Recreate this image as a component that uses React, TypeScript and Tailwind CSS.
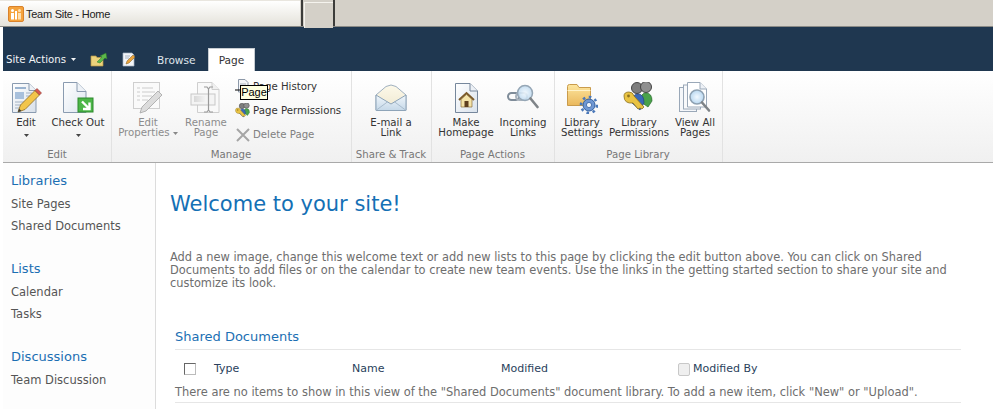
import React from "react";

const Edit = () => (
  <svg width="32" height="32" viewBox="0 0 32 32">
    <defs><linearGradient id="p1" x1="0" y1="0" x2="1" y2="1"><stop offset="0" stopColor="#ffffff"/><stop offset="1" stopColor="#d8e0ea"/></linearGradient></defs>
    <path d="M2.5 1.5H19l7 7V30.5H2.5Z" fill="url(#p1)" stroke="#8a9bb0"/>
    <path d="M19 1.5V8.5H26" fill="#eef2f7" stroke="#8a9bb0"/>
    <rect x="5" y="5" width="11" height="2" fill="#9bb4d0"/>
    <rect x="5" y="10" width="9" height="7" fill="#a8c0dc"/>
    <path d="M16 11h6M16 14h6M5 20h12M5 23h9M5 26h7" stroke="#a3b2c4" strokeWidth="1.2"/>
    <path d="M8 30l2.5-7L25 8.5l4.5 4.5L15 27.5Z" fill="#f2c54b" stroke="#8d6a22" strokeWidth="0.8"/>
    <path d="M25 8.5l2-2 4.5 4.5-2 2Z" fill="#d9584f" stroke="#8b3a33" strokeWidth="0.6"/>
    <path d="M8 30l1-3.5 2.5 2.5Z" fill="#3a3a3a"/>
  </svg>
);
const CheckOut = () => (
  <svg width="32" height="32" viewBox="0 0 32 32">
    <defs><linearGradient id="p2" x1="0" y1="0" x2="1" y2="1"><stop offset="0" stopColor="#ffffff"/><stop offset="1" stopColor="#dde5ef"/></linearGradient></defs>
    <path d="M1.5 0.5H15l9 9V30.5H1.5Z" fill="url(#p2)" stroke="#8a9bb0"/>
    <path d="M15 0.5V9.5H24" fill="#eef2f7" stroke="#8a9bb0"/>
    <rect x="16" y="16" width="15" height="14" fill="#4cb648" stroke="#2d8a2c"/>
    <path d="M20 19.5l7 7M27.5 20.5v6.5H21" fill="none" stroke="#fff" strokeWidth="2.4"/>
  </svg>
);
const EditProps = () => (
  <svg width="32" height="32" viewBox="0 0 32 32">
    <rect x="1.5" y="0.5" width="26" height="26" fill="#fafafa" stroke="#cfcfcf"/>
    <path d="M5 6h3M10 6h11M5 10h3M10 10h13M5 14h3M10 14h10M5 18h3M10 18h6" stroke="#cccccc" strokeWidth="1.2"/>
    <path d="M8 31l2-6L26 9l4 4-16 16Z" fill="#dcdcdc" stroke="#a5a5a5" strokeWidth="0.8"/>
  </svg>
);
const Rename = () => (
  <svg width="32" height="32" viewBox="0 0 32 32">
    <path d="M7.5 0.5H22l7 7V30.5H7.5Z" fill="#f9f9f9" stroke="#cfcfcf"/>
    <path d="M22 0.5V7.5H29" fill="#f0f0f0" stroke="#cfcfcf"/>
    <defs><linearGradient id="r1" x1="0" x2="1"><stop offset="0" stopColor="#d8d8d8"/><stop offset="1" stopColor="#f2f2f2"/></linearGradient></defs>
    <rect x="1" y="12" width="24" height="11" fill="#f4f4f4" stroke="#c8c8c8"/>
    <rect x="4" y="14" width="11" height="6" fill="url(#r1)"/>
    <path d="M14 5h3l1.5 2L20 5h3M18.5 7v21M14 30h3l1.5-2 1.5 2h3" fill="none" stroke="#9a9a9a" strokeWidth="1.2"/>
  </svg>
);
const Mail = () => (
  <svg width="32" height="28" viewBox="0 0 32 28">
    <defs>
      <linearGradient id="m1" x1="0" y1="0" x2="0" y2="1"><stop offset="0" stopColor="#fdf9ea"/><stop offset="1" stopColor="#eee7cf"/></linearGradient>
      <linearGradient id="m2" x1="0" y1="0" x2="0" y2="1"><stop offset="0" stopColor="#f0f6fb"/><stop offset="1" stopColor="#c5d8e8"/></linearGradient>
    </defs>
    <path d="M1 11L11 2.5Q16 -0.5 21 2.5L31 11V26H1Z" fill="url(#m1)" stroke="#9fb0c0"/>
    <path d="M1 11L16 20L31 11V26.5H1Z" fill="url(#m2)" stroke="#8ea4b8"/>
    <path d="M1.5 26L13 17.5M30.5 26L19 17.5" stroke="#a9bccd"/>
  </svg>
);
const Home = () => (
  <svg width="32" height="32" viewBox="0 0 32 32">
    <defs><linearGradient id="h1" x1="0" y1="0" x2="1" y2="1"><stop offset="0" stopColor="#ffffff"/><stop offset="1" stopColor="#d9e2ec"/></linearGradient></defs>
    <path d="M5.5 1.5H20L27.5 9V30.5H5.5Z" fill="url(#h1)" stroke="#76879c"/>
    <path d="M20 1.5V9H27.5" fill="#edf1f6" stroke="#76879c"/>
    <path d="M9 18L16.5 11L24 18" fill="none" stroke="#7c5a2a" strokeWidth="2"/>
    <path d="M11 17.5L16.5 12.5L22 17.5V25H11Z" fill="#f4e3a8" stroke="#8a6f3a" strokeWidth="0.7"/>
    <rect x="14.5" y="19" width="4" height="6" fill="#5e3f1f"/>
  </svg>
);
const Links = () => (
  <svg width="32" height="28" viewBox="0 0 32 28">
    <defs><radialGradient id="l1"><stop offset="0" stopColor="#f0f8fe"/><stop offset="1" stopColor="#bcd8ef"/></radialGradient></defs>
    <rect x="1" y="9" width="11" height="7" rx="3.5" fill="none" stroke="#7f8c99" strokeWidth="2"/>
    <rect x="9" y="9" width="11" height="7" rx="3.5" fill="none" stroke="#a9b3bd" strokeWidth="2"/>
    <circle cx="18" cy="9" r="7.5" fill="url(#l1)" fillOpacity="0.85" stroke="#95a6b5" strokeWidth="1.5"/>
    <path d="M23.5 14.5L30.5 23" stroke="#7f8488" strokeWidth="2.6" strokeLinecap="round"/>
  </svg>
);
const FolderGear = () => (
  <svg width="32" height="32" viewBox="0 0 32 32">
    <defs><linearGradient id="f1" x1="0" y1="0" x2="0" y2="1"><stop offset="0" stopColor="#fde69f"/><stop offset="1" stopColor="#eab85c"/></linearGradient></defs>
    <path d="M1.5 4.5Q1.5 2.5 3.5 2.5H11L13 5.5H24.5V23.5H1.5Z" fill="url(#f1)" stroke="#c99b4c"/>
    <path d="M1.5 8.5H24.5" stroke="#fff3c9"/>
    <circle cx="23" cy="23" r="6" fill="#6f97d3" stroke="#33609f" strokeWidth="1"/>
    <circle cx="23" cy="23" r="8" fill="none" stroke="#4a78b9" strokeWidth="2.6" strokeDasharray="2.6 3.6"/>
    <circle cx="23" cy="23" r="2.6" fill="#f0f5fb" stroke="#33609f" strokeWidth="0.8"/>
  </svg>
);
const People = ({ s = 32 }: { s?: number }) => (
  <svg width={s} height={s} viewBox="0 0 32 32">
    <circle cx="14" cy="6" r="5.5" fill="#7d7d7d" stroke="#444"/>
    <circle cx="23" cy="5" r="5.5" fill="#8f8f8f" stroke="#444"/>
    <path d="M18 20q-1-9 5-9t6 8l-4 6Z" fill="#49a24a" stroke="#2c6c2f" strokeWidth="0.7"/>
    <path d="M9 21q0-9 6-9t6 9l-4 7Z" fill="#3a69b8" stroke="#24447d" strokeWidth="0.7"/>
    <path d="M1 14q0-4 5-4 4 0 5 4l10 11-2 2-2-1-2 1-5-6q-9 1-9-7Z" fill="#e9c343" stroke="#8c7120" strokeWidth="0.8"/>
    <circle cx="5.5" cy="14" r="1.4" fill="#8c7120"/>
  </svg>
);
const Pages = () => (
  <svg width="32" height="32" viewBox="0 0 32 32">
    <defs><radialGradient id="v1"><stop offset="0" stopColor="#f2f9ff"/><stop offset="1" stopColor="#b9d8f1"/></radialGradient></defs>
    <rect x="0.5" y="5.5" width="17" height="24" fill="#f5f7fa" stroke="#9aa8b8"/>
    <rect x="4.5" y="3" width="17" height="24" fill="#f8f9fb" stroke="#9aa8b8"/>
    <path d="M8.5 0.5H21L27.5 7V25H8.5Z" fill="#fff" stroke="#9aa8b8"/>
    <path d="M21 0.5V7H27.5" fill="#edf1f6" stroke="#9aa8b8"/>
    <circle cx="18" cy="15" r="7" fill="url(#v1)" stroke="#8ea1b2" strokeWidth="1.6"/>
    <path d="M23 20.5l7 8" stroke="#7e8387" strokeWidth="2.6" strokeLinecap="round"/>
  </svg>
);
const Caret = ({ c = "#444" }: { c?: string }) => (
  <svg width="5" height="3" viewBox="0 0 5 3" className="inline-block"><path d="M0 0h5L2.5 3Z" fill={c}/></svg>
);

function Big({ w, icon, lines, caret, dim }: { w: string; icon: React.ReactNode; lines: React.ReactNode[]; caret?: boolean; dim?: boolean }) {
  return (
    <div className={`${w} flex flex-col items-center ${dim ? "text-[#8c8c8c]" : "text-[#333]"}`}>
      <div className="mt-[9px] h-[36px] flex items-center justify-center">{icon}</div>
      <div className="mt-[2px] text-center leading-[10px] whitespace-nowrap">
        {lines.map((l, i) => <div key={i}>{l}</div>)}
      </div>
      {caret && <div className="mt-[6px] flex leading-[0]"><Caret /></div>}
    </div>
  );
}

function Group({ w, label, children }: { w: string; label: string; children: React.ReactNode }) {
  return (
    <div className={`${w} -mr-[1px] h-full flex flex-col border-r border-[#e2e2e2]`}>
      <div className="flex-1 flex">{children}</div>
      <div className="h-[15px] text-center leading-[15px] text-[#777]">{label}</div>
    </div>
  );
}

function Nav({ title, items, mt }: { title: string; items: string[]; mt: string }) {
  return (
    <div className={mt}>
      <div className="text-[13px] leading-[16px] text-[#1b6fb3]">{title}</div>
      {items.map((t, i) => (
        <div key={t} className={`${i === 0 ? "mt-[7px]" : "mt-[6px]"} h-[16px] leading-[16px] text-[#555]`}>{t}</div>
      ))}
    </div>
  );
}

export default function App() {
  return (
    <div className="w-[993px] h-[409px] overflow-hidden bg-white relative text-[11px] font-['DejaVu_Sans',sans-serif]">
      {/* browser tabs */}
      <div className="h-[27px] flex bg-[#d4d0c8] border-b border-[#8a8a86]">
        <div className="w-[300px] h-full flex items-center pl-[8px] border-t border-[#e9e6df] bg-gradient-to-b from-white to-[#e4e2da]">
          <svg width="16" height="16" viewBox="0 0 16 16" className="shrink-0">
            <rect x="0.5" y="0.5" width="15" height="15" rx="1.5" fill="#f5a33c" stroke="#d9822b"/>
            <circle cx="4.5" cy="4.5" r="1.5" fill="#fff"/>
            <circle cx="11.5" cy="4.5" r="1.5" fill="#ffe0b0"/>
            <rect x="3" y="7" width="3" height="6.5" fill="#fff"/>
            <rect x="7" y="5" width="2" height="8.5" fill="#fff"/>
            <rect x="10" y="7" width="3" height="6.5" fill="#ffe0b0"/>
          </svg>
          <span className="ml-[2px] mt-[1px] font-['Liberation_Sans',sans-serif] text-[11px] tracking-[-0.25px] text-[#222]">Team Site - Home</span>
        </div>
        <div className="w-[2px] ml-[1px] h-full bg-[#3c3c3a]" />
        <div className="w-[29px] h-full border-t border-l border-[#f5f3ee] ml-[1px] mt-[2px] bg-[#d4d0c8]" />
        <div className="w-[2px] h-full bg-[#3c3c3a]" />
      </div>

      {/* ribbon tabs */}
      <div className="ml-[3px] h-[44px] bg-[#1f3750] flex items-end text-[#e8ecf0]">
        <div className="h-[24px] ml-[3px] w-[84px] flex items-center gap-[5px] pt-[1px] text-[10.2px] text-[#f2f4f6]">
          <span>Site Actions</span><Caret c="#f2f4f6" />
        </div>
        <div className="h-[24px] w-[32px] flex items-center justify-start pt-[2px]">
          <svg width="18" height="16" viewBox="0 0 18 16">
            <path d="M1 4h5l1 1.5h6V14H1Z" fill="#ecd27c" stroke="#b89a45" strokeWidth="0.7"/>
            <path d="M7 10L12 5l-2-1 6-3 1 6-2-1-5 5Z" fill="#5cb84a" stroke="#2c7a2a" strokeWidth="0.5"/>
          </svg>
        </div>
        <div className="h-[24px] w-[35px] flex items-center">
          <svg width="14" height="15" viewBox="0 0 14 15">
            <path d="M1 1h9l2 2v11H1Z" fill="#f2f4f8" stroke="#a8b4c4" strokeWidth="0.7"/>
            <path d="M3 4h5M3 6h4" stroke="#a8b4c4"/>
            <path d="M4 12l1-3 6-6 2 2-6 6Z" fill="#e8a33d" stroke="#7a5a20" strokeWidth="0.5"/>
          </svg>
        </div>
        <div className="h-[23px] w-[51px] flex items-center pt-[3px] text-[10.6px] text-[#dfe4ea]">Browse</div>
        <div className="h-[23px] w-[47px] flex items-center justify-center pt-[2px] text-[10.6px] bg-white border-t border-x border-[#c6ccd2] text-[#333]">Page</div>
      </div>

      {/* ribbon */}
      <div className="ml-[3px] h-[92px] flex border-b border-[#a9a9a9] bg-gradient-to-b from-white to-[#f0f0f0] text-[10.2px]">
        <Group w="w-[109px]" label="Edit">
          <Big w="w-[46px]" icon={<Edit />} lines={["Edit"]} caret />
          <Big w="w-[58px]" icon={<CheckOut />} lines={["Check Out"]} caret />
        </Group>
        <Group w="w-[241px]" label="Manage">
          <Big w="w-[74px]" dim icon={<EditProps />} lines={["Edit", <>Properties <Caret c="#888" /></>]} />
          <Big w="w-[42px]" dim icon={<Rename />} lines={["Rename", "Page"]} />
          <div className="ml-[8px] flex flex-col gap-[8px] pt-[8px] text-[#333]">
            <div className="h-[16px] flex items-center gap-[2px]">
              <svg width="16" height="16" viewBox="0 0 16 16">
                <path d="M3.5 0.5H10l3 3V13H3.5Z" fill="#f4f6f9" stroke="#8c98a8"/>
                <path d="M5 5h6M5 7h6M5 9h4" stroke="#8c98a8" strokeWidth="0.7"/>
                <path d="M0 11h6" stroke="#000"/>
              </svg>
              <span>Page History</span>
            </div>
            <div className="h-[16px] flex items-center gap-[2px]">
              <People s={16} /><span>Page Permissions</span>
            </div>
            <div className="h-[16px] flex items-center gap-[2px] text-[#808080]">
              <svg width="16" height="16" viewBox="0 0 16 16"><path d="M2 2l12 12M14 2L2 14" stroke="#a5a5a5" strokeWidth="2"/></svg>
              <span>Delete Page</span>
            </div>
          </div>
        </Group>
        <Group w="w-[81px]" label="Share & Track">
          <Big w="w-full" icon={<Mail />} lines={["E-mail a", "Link"]} />
        </Group>
        <Group w="w-[124px]" label="Page Actions">
          <Big w="w-[70px]" icon={<Home />} lines={["Make", "Homepage"]} />
          <Big w="w-[44px]" icon={<Links />} lines={["Incoming", "Links"]} />
        </Group>
        <Group w="w-[169px]" label="Page Library">
          <Big w="w-[56px]" icon={<FolderGear />} lines={["Library", "Settings"]} />
          <Big w="w-[58px]" icon={<People />} lines={["Library", "Permissions"]} />
          <Big w="w-[54px]" icon={<Pages />} lines={["View All", "Pages"]} />
        </Group>
      </div>

      {/* body */}
      <div className="ml-[3px] flex h-[246px]">
        <div className="w-[153px] shrink-0 bg-[#fdfdfd] border-r border-[#dcdcdc] pl-[8px] pt-[10px] text-[11.5px]">
          <Nav title="Libraries" items={["Site Pages", "Shared Documents"]} mt="" />
          <Nav title="Lists" items={["Calendar", "Tasks"]} mt="mt-[27px]" />
          <Nav title="Discussions" items={["Team Discussion"]} mt="mt-[27px]" />
        </div>
        <div className="flex-1 pl-[14px]">
          <h1 className="mt-[27px] text-[21px] leading-[28px] text-[#1470b5] font-normal">Welcome to your site!</h1>
          <p className="mt-[33px] w-[800px] leading-[13px] text-[11.4px] text-[#6e6e6e]">
            Add a new image, change this welcome text or add new lists to this page by clicking the edit button above. You can click on Shared Documents to add files or on the calendar to create new team events. Use the links in the getting started section to share your site and customize its look.
          </p>
          <div className="ml-[5px] w-[786px] mt-[39px]">
            <div className="h-[21px] leading-[16px] text-[13px] text-[#1b6fb3] border-b border-[#e6e6e6]">Shared Documents</div>
            <div className="h-[38px] flex items-center text-[#2a3f5c]">
              <div className="ml-[9px] w-[12px] h-[12px] border border-[#666] border-r-[#bbb] border-b-[#bbb] bg-white" />
              <span className="ml-[18px] w-[138px]">Type</span>
              <span className="w-[149px]">Name</span>
              <span className="w-[177px]">Modified</span>
              <div className="w-[12px] h-[13px] border border-[#c8c8c8] rounded-[2px] bg-[#efefef]" />
              <span className="ml-[3px]">Modified By</span>
            </div>
            <div className="h-[15px] -mt-[3px] pb-[1px] leading-[14px] text-[11.45px] text-[#6e6e6e] whitespace-nowrap">
              There are no items to show in this view of the "Shared Documents" document library. To add a new item, click "New" or "Upload".
            </div>
            <div className="mt-[2px] border-b border-[#e6e6e6]" />
          </div>
        </div>
      </div>

      {/* tooltip */}
      <div className="absolute left-[240px] top-[85px] w-[28px] h-[15px] bg-[#ffffe1] border border-black flex items-center justify-center font-['Liberation_Sans',sans-serif] text-[11px] leading-none text-black">Page</div>
    </div>
  );
}
